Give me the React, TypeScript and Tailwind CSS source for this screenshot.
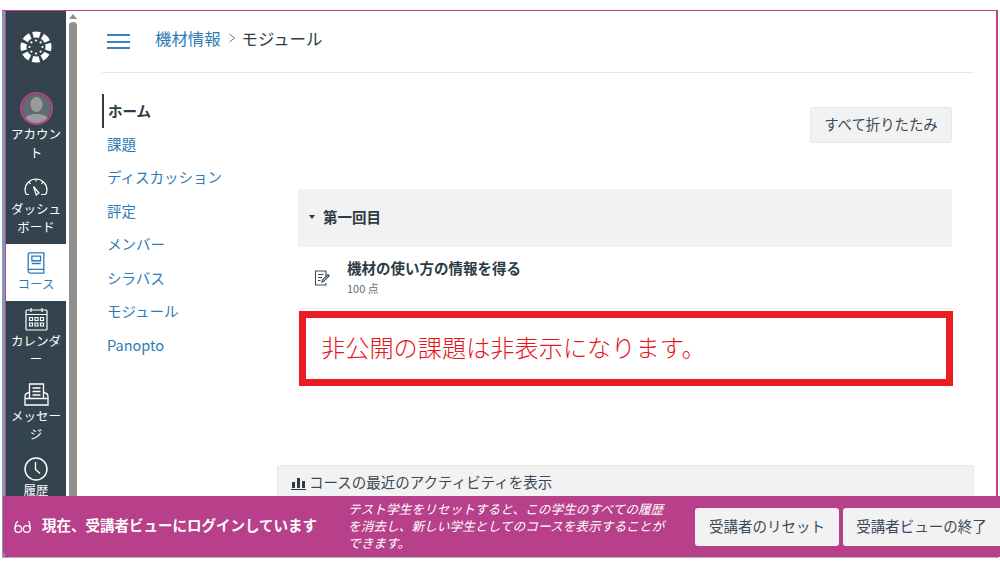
import type { ReactNode } from "react";

const navLinks = ["課題", "ディスカッション", "評定", "メンバー", "シラバス", "モジュール", "Panopto"];

function LogoIcon() {
    return (
        <svg width="32" height="32" viewBox="0 0 32 32" fill="#fff">
            <circle cx="16" cy="16" r="12.500" fill="none" stroke="#fff" strokeWidth="6" strokeDasharray="7 2.820" transform="rotate(-16 16 16)" />
            <circle cx="16" cy="9.500" r="1.100" />
            <circle cx="16" cy="22.500" r="1.100" />
            <circle cx="9.500" cy="16" r="1.100" />
            <circle cx="22.500" cy="16" r="1.100" />
            <circle cx="11.400" cy="11.400" r="1.100" />
            <circle cx="20.600" cy="11.400" r="1.100" />
            <circle cx="11.400" cy="20.600" r="1.100" />
            <circle cx="20.600" cy="20.600" r="1.100" />
        </svg>
    );
}

function AvatarIcon() {
    return (
        <div className="w-[33px] h-[33px] rounded-full border-2 border-[#b9418a] overflow-hidden flex items-center justify-center">
            <svg width="29" height="29" viewBox="0 0 29 29">
                <circle cx="14.500" cy="14.500" r="14.500" fill="#5f6a73" />
                <ellipse cx="14.500" cy="10.500" rx="6" ry="7.500" fill="#9b9b9b" />
                <path d="M2 29c0-7 5-9 12.500-9S27 22 27 29z" fill="#9b9b9b" />
            </svg>
        </div>
    );
}

function DashIcon() {
    return (
        <svg width="24" height="18" viewBox="0 0 24 18" fill="none" stroke="#fff" strokeWidth="1.200">
            <path d="M5 16.500H2.500C1.400 15 1 13.500 1 12A11 11 0 0 1 23 12c0 1.500-.4 3-1.500 4.500H17" />
            <path d="M9.500 8.500l5.500 6.500-2.800 2z" />
            <path d="M12 1v2.500M5 4l1.500 2M19 4l-1.500 2" />
        </svg>
    );
}

function BookIcon() {
    return (
        <svg width="20" height="23" viewBox="0 0 21 25" fill="none" stroke="#2d7bb6" strokeWidth="1.400">
            <path d="M2 20V2.500C2 1.500 2.700 1 3.500 1H19v18H4c-1.300 0-2 .8-2 2s.7 2 2 2h15v-4" />
            <path d="M6 4.500h9.500v5H6zM6 12.500h9.500" />
        </svg>
    );
}

function CalendarIcon() {
    return (
        <svg width="23" height="24" viewBox="0 0 23 24" fill="none" stroke="#fff" strokeWidth="1.200">
            <rect x="1" y="3" width="21" height="20" rx="1" />
            <path d="M1 7.500h21M6 1v4M17 1v4" />
            <path d="M4.500 10.500h3v3h-3zM10 10.500h3v3h-3zM15.500 10.500h3v3h-3zM4.500 16h3v3h-3zM10 16h3v3h-3zM15.500 16h3v3h-3z" />
        </svg>
    );
}

function InboxIcon() {
    return (
        <svg width="25" height="23" viewBox="0 0 25 23" fill="none" stroke="#fff" strokeWidth="1.300">
            <path d="M5.500 15V1h14v14" />
            <path d="M8.500 5h8M8.500 8.500h8M8.500 12h8" />
            <path d="M5 9.500C2.500 10 1 11.500 1 13.500V22h23v-8.500c0-2-1.500-3.500-4-4M1 15.500h23" />
        </svg>
    );
}

function ClockIcon() {
    return (
        <svg width="24" height="24" viewBox="0 0 24 24" fill="none" stroke="#fff" strokeWidth="1.400">
            <circle cx="12" cy="12" r="11" />
            <path d="M11.500 5v7.500l4.500 4" />
        </svg>
    );
}

function SidebarItem(props: { icon: ReactNode; label: string; active?: boolean; className: string }) {
    return (
        <div className={`flex flex-col items-center ${props.active ? "bg-white text-[#2d7bb6]" : "text-white"} ${props.className}`}>
            {props.icon}
            <div className="w-[54px] text-center text-[12.5px] leading-[18.5px] break-all">{props.label}</div>
        </div>
    );
}

function AssignmentIcon() {
    return (
        <svg width="16" height="16" viewBox="0 0 16 16" fill="none" stroke="#3a4a58" strokeWidth="1.100">
            <path d="M12 6V1H1.500v14H12v-2" />
            <path d="M4 4.500h5.500M4 7.500h4M4 10.500h2.500" />
            <path d="M8 12l.5-2L14 4.500l1.200 1.200L9.800 11.300z" />
        </svg>
    );
}

function GlassesIcon() {
    return (
        <svg width="17" height="14" viewBox="0 0 17 14" fill="none" stroke="#fff" strokeWidth="1.200">
            <circle cx="4.200" cy="9" r="3.400" />
            <circle cx="12.800" cy="9" r="3.400" />
            <path d="M1 9C1 5 2 2.500 4 1M16.200 9c0-4-.3-6.500-1.700-8M7.500 9h2" />
        </svg>
    );
}

export default function App() {
    return (
        <div className="relative w-[1000px] h-[582px] overflow-hidden bg-white pt-[10px] font-['Noto_Sans_CJK_JP','Noto_Sans',sans-serif] text-[#2d3b45]">
            <div className="h-[548px] ml-[1.5px] mr-[2px] flex border-t-[1.5px] border-r-[2px] border-b border-t-[#c43d8e] border-r-[#c43d8e] border-b-[#b0b0b0] overflow-hidden">
                {/* global nav */}
                <div className="w-[3px] bg-[#7f9db8]"></div>
                <div className="w-[1.5px] bg-[#c43d8e]"></div>
                <div className="w-[60px] shrink-0 bg-[#34444f] flex flex-col">
                    <div className="h-[70px] flex items-center justify-center pt-[2px]">
                        <LogoIcon />
                    </div>
                    <SidebarItem className="pt-[11px] h-[86px]" icon={<AvatarIcon />} label="アカウント" />
                    <SidebarItem className="pt-[10.5px] h-[76.5px] gap-[4px]" icon={<DashIcon />} label="ダッシュボード" />
                    <SidebarItem active className="pt-[8px] h-[57px]" icon={<BookIcon />} label="コース" />
                    <SidebarItem className="pt-[6px] h-[77px] gap-[1px]" icon={<CalendarIcon />} label="カレンダー" />
                    <SidebarItem className="pt-[5px] h-[74px] gap-[1px]" icon={<InboxIcon />} label="メッセージ" />
                    <SidebarItem className="pt-[5px]" icon={<ClockIcon />} label="履歴" />
                </div>
                {/* scrollbar */}
                <div className="w-[11px] shrink-0 pl-[2px] flex flex-col items-center bg-white">
                    <div className="mt-[3px] border-x-[4px] border-b-[5px] border-x-transparent border-b-[#8f8f8f]"></div>
                    <div className="mt-[3px] w-[8px] flex-1 bg-[#8f8f8f] rounded-t-[4px]"></div>
                </div>

                <div className="flex-1 min-w-0 pl-[25px]">
                    {/* header */}
                    <div className="w-[872px] h-[62px] border-b border-[#e8e8e8] flex pl-[5px]">
                        <div className="mt-[23px] w-[23px] h-[15px] flex flex-col justify-between">
                            <div className="h-[2px] bg-[#3f82b8]"></div>
                            <div className="h-[2px] bg-[#3f82b8]"></div>
                            <div className="h-[2px] bg-[#3f82b8]"></div>
                        </div>
                        <div className="ml-[25px] mt-[15px] flex items-center h-[24px] text-[16.4px]">
                            <span className="text-[#2d7bb6]">機材情報</span>
                            <svg className="ml-[7px] mr-[6px]" width="8" height="10" viewBox="0 0 8 10" fill="none" stroke="#777" strokeWidth="1">
                                <path d="M1.500 1l5 4-5 4" />
                            </svg>
                            <span>モジュール</span>
                        </div>
                    </div>

                    <div className="flex">
                        {/* course nav */}
                        <div className="w-[196px] shrink-0 pt-[21px] text-[14.5px] text-[#2d7bb6]">
                            <div className="h-[34px] pb-[1px] border-l-2 border-[#2d3b45] pl-[4px] flex items-center font-bold text-[#2d3b45]">ホーム</div>
                            {navLinks.map((link) => {
                                return (
                                    <div key={link} className="h-[33.5px] pb-[2px] pl-[5px] flex items-center">
                                        {link}
                                    </div>
                                );
                            })}
                        </div>

                        <div className="flex-1 min-w-0">
                            <div className="w-[654px] flex justify-end pt-[34px]">
                                <div className="w-[142px] h-[36px] pb-[2px] rounded-[3px] bg-[#f2f2f2] border border-[#e6e6e6] flex items-center justify-center text-[14.4px] text-[#3a4a58]">
                                    すべて折りたたみ
                                </div>
                            </div>

                            {/* module */}
                            <div className="mt-[46px] w-[654px] border-b border-[#eeeeee]">
                                <div className="h-[58px] pb-[2px] bg-[#f2f2f2] flex items-center pl-[11px] text-[14.5px] font-bold">
                                    <div className="border-x-[3px] border-t-[4px] border-x-transparent border-t-[#2d3b45] mr-[8px]"></div>
                                    第一回目
                                </div>
                                <div className="h-[61px] flex items-center pl-[16px]">
                                    <AssignmentIcon />
                                    <div className="ml-[17px]">
                                        <div className="text-[14.5px] leading-[20px] font-bold">機材の使い方の情報を得る</div>
                                        <div className="text-[11px] leading-[20px] text-[#5f6d78]">100 点</div>
                                    </div>
                                </div>
                            </div>

                            <div className="mt-[2px] ml-[1px] w-[654px] h-[75px] pb-[3px] border-[7px] border-[#ec1c24] flex items-center pl-[15px] text-[24.2px] font-light text-[#e6141c]">
                                非公開の課題は非表示になります。
                            </div>

                            {/* activity */}
                            <div className="mt-[79px] -ml-[21px] w-[697px] h-[60px] rounded-[3px] bg-[#f2f2f2] border border-[#e8e8e8] pl-[13px] pt-[5px] flex items-start text-[14.5px] text-[#3a4a58]">
                                <svg className="mt-[6px] mr-[3px]" width="15" height="13" viewBox="0 0 15 13" fill="#2d3b45">
                                    <path d="M1 5h3v6H1zM6 1h3v10H6zM11 4h3v7h-3zM0 12h15v1H0z" />
                                </svg>
                                コースの最近のアクティビティを表示
                            </div>
                        </div>
                    </div>
                </div>
            </div>

            {/* student view banner */}
            <div className="absolute left-[3px] right-0 top-[496px] h-[61px] rounded-bl-[6px] bg-[#b8408a] flex items-center text-white">
                <div className="ml-[11px] mr-[11px]">
                    <GlassesIcon />
                </div>
                <div className="w-[306px] shrink-0 pb-[3px] text-[14.500px] font-bold">現在、受講者ビューにログインしています</div>
                <div className="w-[347px] shrink-0 pb-[3px] pr-[25px] text-[12.700px] leading-[17px] italic">
                    テスト学生をリセットすると、この学生のすべての履歴を消去し、新しい学生としてのコースを表示することができます。
                </div>
                <div className="w-[144px] h-[38px] pb-[2px] rounded-[3px] bg-[#f2f2f2] flex items-center justify-center text-[14.500px] text-[#3a4a58]">受講者のリセット</div>
                <div className="ml-[4px] flex-1 h-[38px] pb-[2px] rounded-l-[3px] bg-[#f2f2f2] flex items-center justify-center text-[14.500px] text-[#3a4a58]">受講者ビューの終了</div>
            </div>
        </div>
    );
}
